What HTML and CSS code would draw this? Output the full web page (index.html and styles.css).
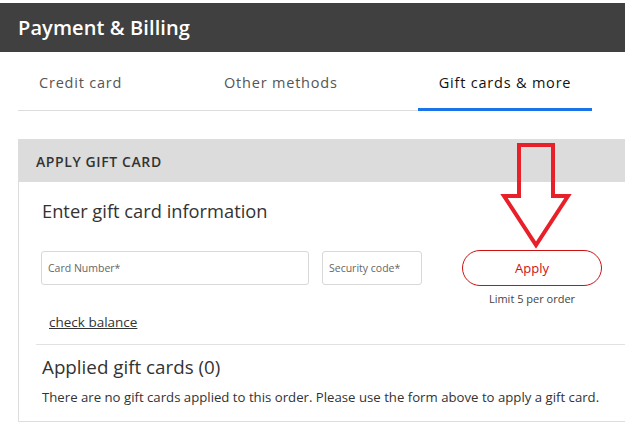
FILE: index.html
```html
<!DOCTYPE html>
<html>
<head>
<meta charset="utf-8">
<link rel="stylesheet" href="styles.css">
</head>
<body>
<div class="page">
  <header class="topbar"><h1>Payment &amp; Billing</h1></header>
  <nav class="tabs">
    <div class="tab">Credit card</div>
    <div class="tab">Other methods</div>
    <div class="tab active">Gift cards &amp; more</div>
  </nav>
  <section class="card">
    <div class="card-head">APPLY GIFT CARD</div>
    <div class="card-body">
      <h2>Enter gift card information</h2>
      <div class="form-row">
        <div class="input wide">Card Number*</div>
        <div class="input narrow">Security code*</div>
        <div class="apply-col">
          <button class="apply">Apply</button>
          <div class="limit">Limit 5 per order</div>
        </div>
      </div>
      <a class="balance">check balance</a>
      <div class="divider"></div>
      <h2 class="applied">Applied gift cards (0)</h2>
      <p class="note">There are no gift cards applied to this order. Please use the form above to apply a gift card.</p>
    </div>
  </section>
  <svg class="arrow" width="80" height="120" viewBox="0 0 80 120">
    <polygon points="19,2 53,2 53,53 68,53 36,102 4,53 19,53" fill="none" stroke="#e8202a" stroke-width="4" stroke-linejoin="miter"/>
  </svg>
</div>
</body>
</html>
```
FILE: styles.css
```css
html, body { margin: 0; padding: 0; background: #fff; overflow: hidden; }
body { font-family: "Open Sans", "Noto Sans", "DejaVu Sans", sans-serif; color: #333; }
.page { position: relative; width: 625px; height: 427px; padding-top: 3px; box-sizing: border-box; overflow: hidden; }
.topbar { background: #404040; height: 49px; display: flex; align-items: center; padding-left: 18px; }
.topbar h1 { margin: 0; color: #fff; font-size: 20px; font-weight: 600; letter-spacing: 0.1px; }
.tabs { display: flex; margin: 0 33px 0 18px; height: 59px; border-bottom: 1px solid #ddd; box-sizing: border-box; align-items: stretch; }
.tab { font-size: 14.5px; letter-spacing: 0.8px; color: #555; display: flex; align-items: center; padding-top: 3px; box-sizing: border-box; }
.tab:nth-child(1) { padding-left: 21px; width: 206px; }
.tab:nth-child(2) { width: 194px; }
.tab.active { color: #111; width: 174px; justify-content: center; border-bottom: 3px solid #1a73e8; border-radius: 3px 3px 0 0; margin-bottom: -1px; padding-top: 4px; }
.card { margin: 28px 0 0 18px; width: 640px; border: 1px solid #ddd; height: 283px; box-sizing: border-box; }
.card-head { background: #dcdcdc; height: 42px; display: flex; align-items: center; padding-left: 17px; font-size: 14px; font-weight: 600; letter-spacing: 0.6px; color: #333; }
.card-body { padding: 0 0 0 23px; }
.card-body h2 { margin: 17px 0 0; font-size: 18.3px; font-weight: 500; color: #333; line-height: 24px; }
.form-row { display: flex; align-items: flex-start; margin-top: 28px; }
.input { height: 34px; border: 1px solid #d8d8d8; border-radius: 3px; box-sizing: border-box; font-size: 10.5px; color: #666; display: flex; align-items: center; padding-left: 6px; }
.wide { width: 268px; margin-left: -1px; }
.narrow { width: 100px; margin-left: 13px; }
.apply-col { margin-left: 40px; display: flex; flex-direction: column; align-items: center; margin-top: -1px; }
.apply { width: 140px; height: 36px; border: 1px solid #cc1111; border-radius: 18px; background: #fff; color: #cc1111; font-family: inherit; font-size: 13px; font-weight: 500; }
.limit { font-size: 11px; color: #444; margin-top: 5px; }
.balance { display: block; margin: 7px 0 0 7px; font-size: 13.5px; color: #333; text-decoration: underline; line-height: 18px; }
.divider { margin: 13px 0 0 -6px; border-top: 1px solid #e2e2e2; }
.card-body h2.applied { margin-top: 10px; font-size: 18.8px; }
.note { margin: 9px 0 0; font-size: 13.2px; color: #333; }
.arrow { position: absolute; left: 500px; top: 143px; }
```
